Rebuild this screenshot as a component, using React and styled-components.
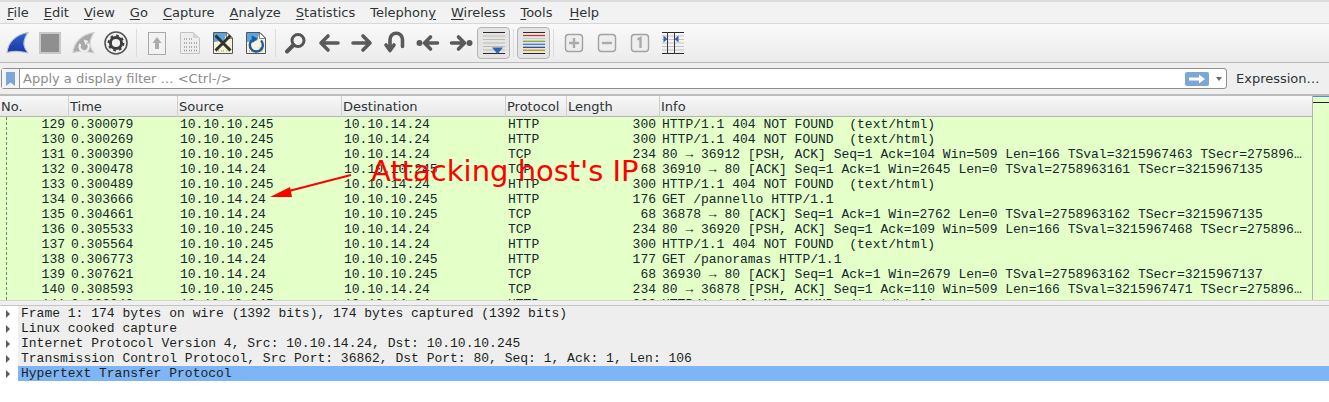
import React from 'react';
import styled, { createGlobalStyle, css } from 'styled-components';

const GlobalStyle = createGlobalStyle`
  html, body {
    margin: 0;
    padding: 0;
    background: #ffffff;
  }
  body {
    font-family: "DejaVu Sans", sans-serif;
    font-size: 13px;
    color: #2e3436;
  }
`;

const menus = [
  ['', 'F', 'ile'],
  ['', 'E', 'dit'],
  ['', 'V', 'iew'],
  ['', 'G', 'o'],
  ['', 'C', 'apture'],
  ['', 'A', 'nalyze'],
  ['', 'S', 'tatistics'],
  ['Telephon', 'y', ''],
  ['', 'W', 'ireless'],
  ['', 'T', 'ools'],
  ['', 'H', 'elp'],
];

const columns = ['No.', 'Time', 'Source', 'Destination', 'Protocol', 'Length', 'Info'];

const SRV = '10.10.10.245';
const ATK = '10.10.14.24';
const NF = 'HTTP/1.1 404 NOT FOUND  (text/html)';

const packets = [
  [129, '0.300079', SRV, ATK, 'HTTP', 300, NF],
  [130, '0.300269', SRV, ATK, 'HTTP', 300, NF],
  [131, '0.300390', SRV, ATK, 'TCP', 234, '80 → 36912 [PSH, ACK] Seq=1 Ack=104 Win=509 Len=166 TSval=3215967463 TSecr=275896…'],
  [132, '0.300478', ATK, SRV, 'TCP', 68, '36910 → 80 [ACK] Seq=1 Ack=1 Win=2645 Len=0 TSval=2758963161 TSecr=3215967135'],
  [133, '0.300489', SRV, ATK, 'HTTP', 300, NF],
  [134, '0.303666', ATK, SRV, 'HTTP', 176, 'GET /pannello HTTP/1.1'],
  [135, '0.304661', ATK, SRV, 'TCP', 68, '36878 → 80 [ACK] Seq=1 Ack=1 Win=2762 Len=0 TSval=2758963162 TSecr=3215967135'],
  [136, '0.305533', SRV, ATK, 'TCP', 234, '80 → 36920 [PSH, ACK] Seq=1 Ack=109 Win=509 Len=166 TSval=3215967468 TSecr=275896…'],
  [137, '0.305564', SRV, ATK, 'HTTP', 300, NF],
  [138, '0.306773', ATK, SRV, 'HTTP', 177, 'GET /panoramas HTTP/1.1'],
  [139, '0.307621', ATK, SRV, 'TCP', 68, '36930 → 80 [ACK] Seq=1 Ack=1 Win=2679 Len=0 TSval=2758963162 TSecr=3215967137'],
  [140, '0.308593', SRV, ATK, 'TCP', 234, '80 → 36878 [PSH, ACK] Seq=1 Ack=110 Win=509 Len=166 TSval=3215967471 TSecr=275896…'],
  [141, '0.309043', SRV, ATK, 'HTTP', 300, NF],
];

const details = [
  'Frame 1: 174 bytes on wire (1392 bits), 174 bytes captured (1392 bits)',
  'Linux cooked capture',
  'Internet Protocol Version 4, Src: 10.10.14.24, Dst: 10.10.10.245',
  'Transmission Control Protocol, Src Port: 36862, Dst Port: 80, Seq: 1, Ack: 1, Len: 106',
  'Hypertext Transfer Protocol',
];

const gridColumns = css`
  display: grid;
  grid-template-columns: 68px 109px 164px 164px 61px 93px 1fr;
`;

const Page = styled.div`
  position: relative;
  width: 1329px;
  height: 402px;
  overflow: hidden;
  background: #fff;
`;

const MenuBar = styled.div`
  display: flex;
  height: 21px;
  align-items: center;
  padding-left: 7px;
  gap: 15px;
  background: #f2f2f2;
  border-top: 2px solid #dcdcdc;
  border-bottom: 1px solid #d8d8d8;
  color: #2e3436;
  font-size: 13px;
`;

const MenuItem = styled.span`
  &:last-child {
    margin-left: 2px;
  }
  u {
    text-underline-offset: 2px;
  }
`;

const Toolbar = styled.div`
  display: flex;
  align-items: center;
  height: 38px;
  background: linear-gradient(#f9f9f9, #ececec);
  border-bottom: 1px solid #b9b9b9;
`;

const ToolButton = styled.div`
  width: 33px;
  height: 32px;
  box-sizing: border-box;
  display: flex;
  align-items: center;
  justify-content: center;
  border-radius: 4px;
  ${(p) =>
    p.$active &&
    css`
      background: #e4e4e4;
      border: 1px solid #b4b4b4;
    `}
`;

const Separator = styled.div`
  width: ${(p) => (p.$wide ? 8 : 7)}px;
  height: 28px;
  display: flex;
  justify-content: center;
  &::after {
    content: '';
    width: 1px;
    background: #dcdcdc;
  }
`;

const FilterBar = styled.div`
  display: flex;
  align-items: center;
  height: 31px;
  padding-left: 1px;
  background: #efefef;
  border-bottom: 2px solid #bcbcbc;
`;

const FilterBox = styled.div`
  display: flex;
  align-items: center;
  width: 1226px;
  height: 21px;
  box-sizing: border-box;
  background: #fff;
  border: 1px solid #8f8f8f;
  border-radius: 3px;
`;

const Bookmark = styled.div`
  width: 17px;
  height: 100%;
  display: flex;
  align-items: center;
  justify-content: center;
  border-right: 1px solid #8f8f8f;
  background: #f4f4f4;
`;

const FilterHint = styled.div`
  flex: 1;
  padding-left: 3px;
  color: #8c8c8c;
  font-size: 13px;
`;

const ApplyButton = styled.div`
  width: 24px;
  height: 14px;
  display: flex;
  align-items: center;
  justify-content: center;
  background: #7ba7d7;
  border-radius: 2px;
  margin-right: 7px;
`;

const Caret = styled.div`
  width: 0;
  height: 0;
  margin-right: 4px;
  border-left: 3.5px solid transparent;
  border-right: 3.5px solid transparent;
  border-top: 4px solid #6a6a6a;
`;

const ExpressionLabel = styled.div`
  margin-left: 9px;
  font-size: 13px;
  color: #2e3436;
`;

const PacketArea = styled.div`
  display: flex;
  height: 204px;
`;

const PacketPane = styled.div`
  flex: 1;
  min-width: 0;
  overflow: hidden;
`;

const HeaderRow = styled.div`
  ${gridColumns}
  height: 21px;
  box-sizing: border-box;
  border-bottom: 1px solid #b4b4b4;
  background: linear-gradient(#f8f8f8, #e8e8e8);
`;

const HeaderCell = styled.div`
  padding-left: 1px;
  line-height: 21px;
  font-size: 13px;
  color: #2e3436;
  border-left: ${(p) => (p.$first ? 'none' : '1px solid #cfcfcf')};
`;

const PacketRow = styled.div`
  ${gridColumns}
  position: relative;
  height: 15px;
  line-height: 15px;
  background: #e4ffc7;
  color: #12272e;
  font-family: "Liberation Mono", monospace;
  font-size: 13px;
  white-space: pre;
`;

const Cell = styled.div`
  padding: 0 3px;
  overflow: hidden;
  text-align: ${(p) => (p.$right ? 'right' : 'left')};
  ${(p) =>
    p.$related &&
    css`
      background: repeating-linear-gradient(#6f8a6f 0 3px, transparent 3px 5px) 6px 0 / 1px 100% no-repeat;
    `}
`;

const Minimap = styled.div`
  width: 16px;
  border-left: 1px solid #b4b4b4;
  background:
    linear-gradient(#12272e, #12272e) 0 6px / 100% 1px no-repeat,
    linear-gradient(#4a90d9, #4a90d9) 0 0 / 100% 1px no-repeat,
    #e4ffc7;
`;

const Splitter = styled.div`
  height: 5px;
  box-sizing: border-box;
  background: #f0f0f0;
  border-top: 1px solid #d4d4d4;
`;

const DetailPane = styled.div`
  border-top: 1px solid #c4c4c4;
`;

const DetailRow = styled.div`
  display: flex;
  height: 15px;
  line-height: 15px;
  font-family: "Liberation Mono", monospace;
  font-size: 13px;
  white-space: pre;
  color: #1c1f20;
`;

const Expander = styled.div`
  width: 18px;
  display: flex;
  align-items: center;
  padding-left: 6px;
  box-sizing: border-box;
  &::before {
    content: '';
    border-top: 4px solid transparent;
    border-bottom: 4px solid transparent;
    border-left: 4px solid #5c5c5c;
  }
`;

const DetailText = styled.div`
  flex: 1;
  padding-left: 3px;
  background: ${(p) => (p.$selected ? '#7eb5f6' : '#eeeeee')};
`;

const Annotation = styled.div`
  position: absolute;
  left: 371px;
  top: 153px;
  color: #ff0000;
  font-size: 29px;
  line-height: 36px;
  white-space: nowrap;
`;

const AnnotationArrow = styled.svg`
  position: absolute;
  left: 265px;
  top: 170px;
`;

const Icon = ({ children }) => (
  <svg width="24" height="24" viewBox="0 0 24 24">
    {children}
  </svg>
);

const SHARK = 'M2 21.5C3 12 10 3.5 23 1.5C20 6 18.5 10 19 14C19.5 17 21 19.5 23 22C15 20 8 20 2 21.5Z';

const DocShape = () => (
  <>
    <path d="M2.5 1.5H16L21.5 7V22.5H2.5Z" fill="#f6f3d8" stroke="#555" />
    <path d="M3 2H15.5L13 9.5L3 11Z" fill="#5aa5dc" />
    <path d="M15.5 1.5V7.5H21.5Z" fill="#fff" stroke="#555" strokeWidth="0.7" />
    <path d="M5 20h3M10 20h3M15.5 20h3M5 17h3M15.5 17h3" stroke="#8b8b70" strokeWidth="1.2" strokeDasharray="1 1" />
  </>
);

const RoundArrow = ({ d }) => (
  <Icon>
    <path d={d} fill="none" stroke="#5a5a5a" strokeWidth="3.6" strokeLinecap="round" strokeLinejoin="round" />
  </Icon>
);

const ZoomKey = ({ children }) => (
  <Icon>
    <rect x="3.5" y="3.5" width="17" height="17" rx="3" fill="#eeeeee" stroke="#a2a2a2" strokeWidth="1.4" />
    {children}
  </Icon>
);

const tools = [
  {
    id: 'start',
    icon: (
      <Icon>
        <defs>
          <linearGradient id="fin" x1="0" y1="0" x2="0" y2="1">
            <stop offset="0" stopColor="#2f62d0" />
            <stop offset="1" stopColor="#1a35a8" />
          </linearGradient>
        </defs>
        <path d={SHARK} fill="url(#fin)" stroke="#b8c4cf" strokeWidth="1.2" />
      </Icon>
    ),
  },
  {
    id: 'stop',
    icon: (
      <Icon>
        <rect x="2" y="2" width="20" height="20" fill="#8f8f8f" stroke="#c8c8c8" strokeWidth="2" />
      </Icon>
    ),
  },
  {
    id: 'restart',
    icon: (
      <Icon>
        <path d={SHARK} fill="#a9a9a9" stroke="#d0d0d0" strokeWidth="1.2" />
        <path d="M9.5 13A4.6 4.6 0 1 0 16.5 12.5" fill="none" stroke="#eee" strokeWidth="2.4" />
        <path d="M12.5 8.5L17.5 10L14.5 14Z" fill="#eee" />
      </Icon>
    ),
  },
  {
    id: 'options',
    icon: (
      <Icon>
        <circle cx="12" cy="12" r="11" fill="#f1f1f1" stroke="#555" strokeWidth="1.6" />
        <circle cx="12" cy="12" r="5.6" fill="none" stroke="#3d3d3d" strokeWidth="3" />
        <circle cx="12" cy="12" r="7.4" fill="none" stroke="#3d3d3d" strokeWidth="2" strokeDasharray="2.6 3.2" />
      </Icon>
    ),
  },
  { sep: true, wide: true },
  {
    id: 'open',
    icon: (
      <Icon>
        <rect x="3.5" y="1.5" width="17" height="22" fill="#f2f2f2" stroke="#a9a9a9" />
        <path d="M12 6L16.5 12H14V18H10V12H7.5Z" fill="#ababab" />
      </Icon>
    ),
  },
  {
    id: 'save',
    icon: (
      <Icon>
        <path d="M2.5 1.5H15L21.5 7V22.5H2.5Z" fill="#eeeeee" stroke="#c2c2c2" />
        <path d="M15 1.5V7H21.5Z" fill="#d2d2d2" />
        <path d="M6 8h3M11 8h3M6 12h3M11 12h3M16 12h3M6 16h3M11 16h3M16 16h3M6 19.5h3M11 19.5h3M16 19.5h3" stroke="#999" strokeWidth="1.6" strokeDasharray="1 1" />
      </Icon>
    ),
  },
  {
    id: 'close',
    icon: (
      <Icon>
        <DocShape />
        <path d="M4.5 4.5L19.5 19.5M19.5 4.5L4.5 19.5" stroke="#333" strokeWidth="3" />
      </Icon>
    ),
  },
  {
    id: 'reload',
    icon: (
      <Icon>
        <DocShape />
        <path d="M9 8.5A6.5 6.5 0 1 0 17 9.5" fill="none" stroke="#1c5aa8" strokeWidth="2.4" />
        <path d="M7.5 4.5L14 7.5L8.5 12Z" fill="#1c5aa8" />
      </Icon>
    ),
  },
  { sep: true },
  {
    id: 'find',
    icon: (
      <Icon>
        <circle cx="14" cy="9.5" r="6" fill="#f4f4f4" stroke="#555" strokeWidth="3" />
        <path d="M9.5 14L3 20.5" stroke="#555" strokeWidth="4" strokeLinecap="round" />
      </Icon>
    ),
  },
  { id: 'back', icon: <RoundArrow d="M21 12H4.5M11 5L4 12L11 19" /> },
  { id: 'forward', icon: <RoundArrow d="M3 12H19.5M13 5L20 12L13 19" /> },
  {
    id: 'jump',
    icon: <RoundArrow d="M7 17V8.5A6.25 6.25 0 0 1 19.5 8.5V15.5M3 14L7 19.5L11 14" />,
  },
  {
    id: 'first',
    icon: (
      <Icon>
        <circle cx="3.5" cy="12" r="3" fill="#5a5a5a" />
        <path d="M21.5 12H9.5M14.5 6L8.5 12L14.5 18" fill="none" stroke="#5a5a5a" strokeWidth="3.6" strokeLinecap="round" strokeLinejoin="round" />
      </Icon>
    ),
  },
  {
    id: 'last',
    icon: (
      <Icon>
        <circle cx="20.5" cy="12" r="3" fill="#5a5a5a" />
        <path d="M2.5 12H14.5M9.5 6L15.5 12L9.5 18" fill="none" stroke="#5a5a5a" strokeWidth="3.6" strokeLinecap="round" strokeLinejoin="round" />
      </Icon>
    ),
  },
  {
    id: 'autoscroll',
    active: true,
    icon: (
      <Icon>
        <path d="M1 1.5H23M1 22.5H23" stroke="#2a2a2a" strokeWidth="1.2" />
        <path d="M1 5H23M1 8.5H23M1 12H23M1 15.5H23M1 19H23" stroke="#bdbdb4" />
        <path d="M10 16.5H21L15.5 23Z" fill="#2f66b0" />
      </Icon>
    ),
  },
  { sep: true },
  {
    id: 'colorize',
    active: true,
    icon: (
      <Icon>
        <path d="M1 1.5H23M1 22.5H23" stroke="#2a2a2a" strokeWidth="1.2" />
        <path d="M1 4.5H23" stroke="#d62a2a" strokeWidth="1.2" />
        <path d="M1 7.5H23" stroke="#c9c9c9" strokeWidth="1" />
        <path d="M1 10.3H23" stroke="#6aaa2a" strokeWidth="1.2" />
        <path d="M1 13.3H23" stroke="#2a72d4" strokeWidth="1.2" />
        <path d="M1 16.3H23" stroke="#1f3f8a" strokeWidth="1.2" />
        <path d="M1 19.3H23" stroke="#c99a10" strokeWidth="1.4" />
      </Icon>
    ),
  },
  { sep: true },
  {
    id: 'zoom-in',
    icon: (
      <ZoomKey>
        <path d="M12 7V17M7 12H17" stroke="#aaa" strokeWidth="2.4" />
      </ZoomKey>
    ),
  },
  {
    id: 'zoom-out',
    icon: (
      <ZoomKey>
        <path d="M7 12H17" stroke="#aaa" strokeWidth="2.4" />
      </ZoomKey>
    ),
  },
  {
    id: 'zoom-reset',
    icon: (
      <ZoomKey>
        <path d="M9.5 8.5L12.5 7V17" fill="none" stroke="#aaa" strokeWidth="2.4" />
      </ZoomKey>
    ),
  },
  {
    id: 'resize',
    icon: (
      <Icon>
        <path d="M1 1.5H23M1 22.5H23" stroke="#2a2a2a" />
        <path d="M1 5H23M1 8.5H23M1 12H23M1 15.5H23M1 19H23" stroke="#c4c4c4" />
        <path d="M6.5 1V23M13.5 1V23" stroke="#3a3a3a" />
        <path d="M2.5 4.5L6.5 8L2.5 11.5ZM17.5 4.5L13.5 8L17.5 11.5Z" fill="#2f66b0" />
      </Icon>
    ),
  },
];

export default function App() {
  return (
    <Page>
      <GlobalStyle />
      <MenuBar>
        {menus.map(([before, key, after]) => (
          <MenuItem key={before + key + after}>
            {before}
            <u>{key}</u>
            {after}
          </MenuItem>
        ))}
      </MenuBar>

      <Toolbar>
        {tools.map((t, i) =>
          t.sep ? (
            <Separator key={i} $wide={t.wide} />
          ) : (
            <ToolButton key={t.id} $active={t.active}>
              {t.icon}
            </ToolButton>
          )
        )}
      </Toolbar>

      <FilterBar>
        <FilterBox>
          <Bookmark>
            <svg width="9" height="14" viewBox="0 0 9 14">
              <path d="M0 0H9V14L4.5 10.5L0 14Z" fill="#7ba7d7" />
            </svg>
          </Bookmark>
          <FilterHint>Apply a display filter … &lt;Ctrl-/&gt;</FilterHint>
          <ApplyButton>
            <svg width="18" height="10" viewBox="0 0 18 10">
              <path d="M1 3.5H11V0.5L17 5L11 9.5V6.5H1Z" fill="#ffffff" />
            </svg>
          </ApplyButton>
          <Caret />
        </FilterBox>
        <ExpressionLabel>Expression…</ExpressionLabel>
      </FilterBar>

      <PacketArea>
        <PacketPane>
          <HeaderRow>
            {columns.map((c, i) => (
              <HeaderCell key={c} $first={i === 0}>
                {c}
              </HeaderCell>
            ))}
          </HeaderRow>
          {packets.map(([no, time, src, dst, proto, len, info]) => (
            <PacketRow key={no}>
              <Cell $right $related>
                {no}
              </Cell>
              <Cell>{time}</Cell>
              <Cell>{src}</Cell>
              <Cell>{dst}</Cell>
              <Cell>{proto}</Cell>
              <Cell $right>{len}</Cell>
              <Cell>{info}</Cell>
            </PacketRow>
          ))}
        </PacketPane>
        <Minimap />
      </PacketArea>

      <Splitter />
      <DetailPane>
        {details.map((d, i) => (
          <DetailRow key={d}>
            <Expander />
            <DetailText $selected={i === details.length - 1}>{d}</DetailText>
          </DetailRow>
        ))}
      </DetailPane>

      <Annotation>Attacking host's IP</Annotation>
      <AnnotationArrow width="90" height="32" viewBox="0 0 90 32">
        <path d="M86 5L20 22" stroke="#ff0000" strokeWidth="2" />
        <path d="M5 27L25 17L27 27Z" fill="#ff0000" />
      </AnnotationArrow>
    </Page>
  );
}
